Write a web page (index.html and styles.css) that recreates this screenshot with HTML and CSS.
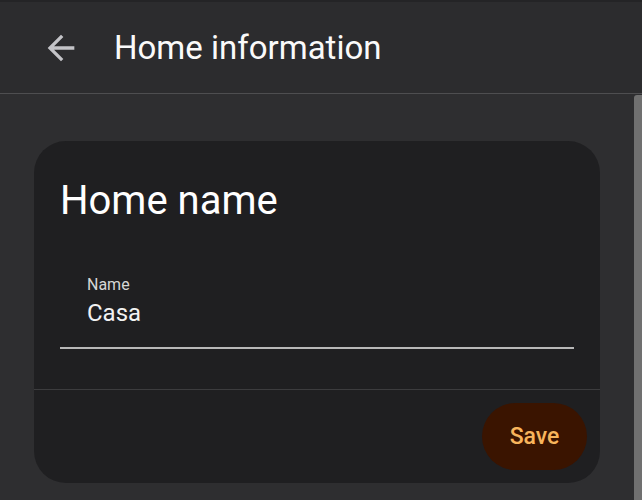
FILE: index.html
```html
<!DOCTYPE html>
<html lang="en">
<head>
    <meta charset="UTF-8">
    <meta name="viewport" content="width=device-width, initial-scale=1.0">
    <title>Home information</title>
    <link rel="stylesheet" href="styles.css">
</head>
<body>
    <header class="topbar">
        <svg class="back" viewBox="0 0 24 24" width="40" height="40">
            <path d="M20 11H7.83l5.59-5.59L12 4l-8 8 8 8 1.41-1.41L7.83 13H20v-2z" fill="#c4c4c8"/>
        </svg>
        <h1 class="title">Home information</h1>
    </header>

    <div class="page">
        <main class="content">
            <section class="card">
                <div class="card-body">
                    <h2 class="card-title">Home name</h2>
                    <div class="field">
                        <span class="field-label">Name</span>
                        <span class="field-value">Casa</span>
                    </div>
                </div>
                <div class="card-actions">
                    <div class="button">Save</div>
                </div>
            </section>
        </main>
        <div class="scrollbar"><div class="thumb"></div></div>
    </div>
</body>
</html>
```

FILE: styles.css
```css
html, body {
    margin: 0;
    height: 100%;
}
body {
    background-color: #2e2e30;
    font-family: Roboto, "Liberation Sans", sans-serif;
    color: #fff;
    display: flex;
    flex-direction: column;
    overflow: hidden;
}
.topbar {
    box-sizing: border-box;
    height: 94px;
    flex-shrink: 0;
    display: flex;
    align-items: center;
    padding-left: 41px;
    background-color: #2c2c2e;
    border-top: 2px solid #242426;
    border-bottom: 1px solid #4e4e50;
}
.back {
    display: block;
}
.title {
    margin: 0 0 0 33px;
    font-size: 33px;
    line-height: 40px;
    font-weight: 400;
    color: #fafafa;
}
.page {
    flex: 1;
    display: flex;
    min-height: 0;
}
.content {
    flex: 1;
    padding: 47px 34px 0 34px;
}
.scrollbar {
    width: 8px;
    padding-top: 1px;
    display: flex;
}
.thumb {
    flex: 1;
    background-color: #707070;
    border-radius: 3px 0 0 0;
}
.card {
    background-color: #1f1f21;
    border-radius: 32px;
}
.card-body {
    padding: 36px 26px 40px 26px;
    border-bottom: 1px solid #3c3c3e;
}
.card-title {
    margin: 0 0 50px 0;
    font-size: 40px;
    line-height: 48px;
    font-weight: 400;
    color: #fff;
}
.field {
    display: flex;
    flex-direction: column;
    gap: 3px;
    padding: 0 0 19px 27px;
    border-bottom: 2px solid #b8b8b8;
}
.field-label {
    font-size: 16px;
    line-height: 20px;
    color: #d6d6d6;
}
.field-value {
    font-size: 24px;
    line-height: 30px;
    color: #f2f2f2;
}
.card-actions {
    display: flex;
    justify-content: flex-end;
    padding: 13px;
}
.button {
    width: 105px;
    height: 67px;
    border-radius: 34px;
    background-color: #3a1400;
    color: #f8b55c;
    font-size: 23px;
    font-weight: 500;
    display: flex;
    align-items: center;
    justify-content: center;
}
```
